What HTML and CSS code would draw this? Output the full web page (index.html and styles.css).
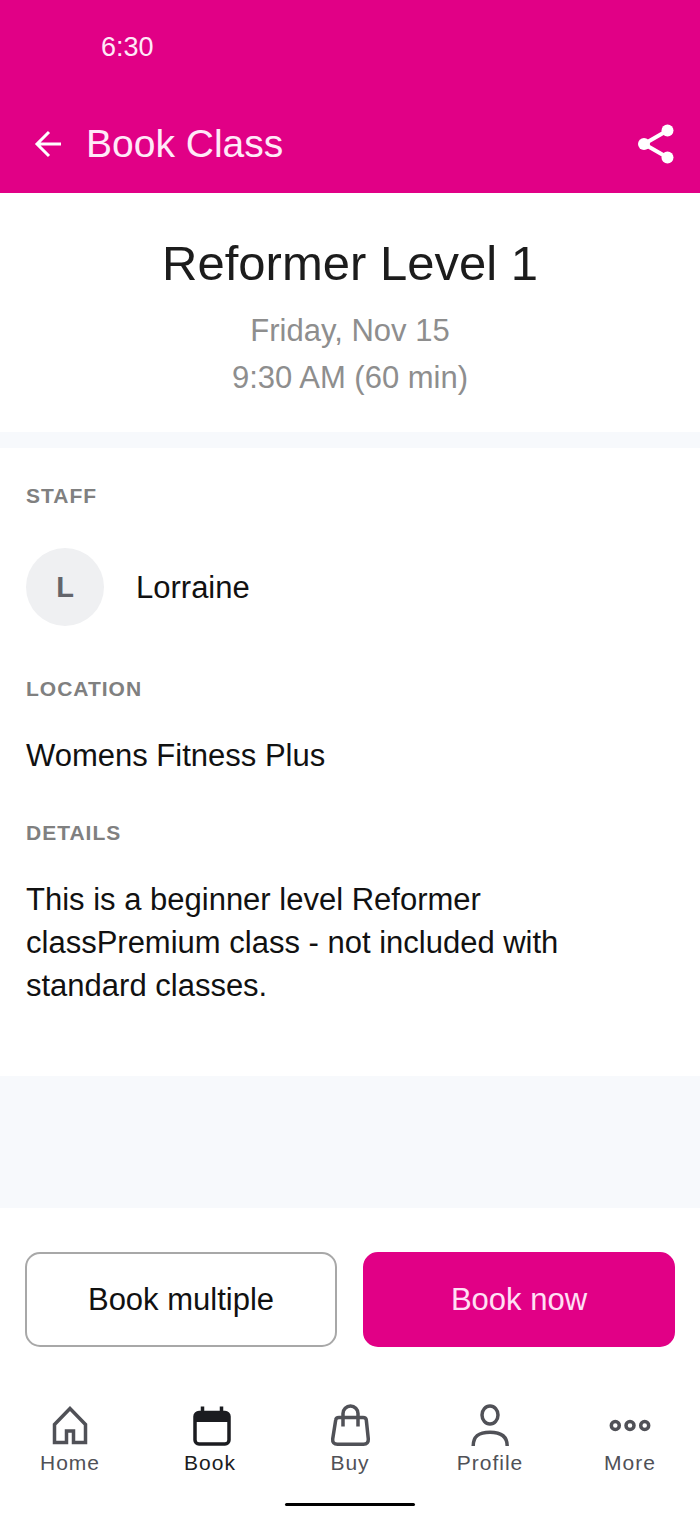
FILE: index.html
```html
<!DOCTYPE html>
<html lang="en">
<head>
  <meta charset="UTF-8" />
  <meta name="viewport" content="width=device-width, initial-scale=1.0" />
  <title>Book Class</title>
  <link rel="stylesheet" href="styles.css">
</head>
<body>
  <header class="header">
    <div class="status-bar">6:30</div>
    <div class="app-bar">
      <button class="icon-button" type="button" aria-label="Back">
        <svg width="28" height="28" viewBox="0 0 28 28" fill="none" stroke="currentColor" stroke-width="3">
          <path d="M27 14H3M15 2L3 14l12 12" />
        </svg>
      </button>
      <div class="app-title">Book Class</div>
      <button class="icon-button" type="button" aria-label="Share">
        <svg width="40" height="40" viewBox="0 0 40 40" fill="currentColor">
          <path d="M31.500 6.500L8 20l23.500 13.500" fill="none" stroke="currentColor" stroke-width="4" />
          <circle cx="31.500" cy="6.500" r="6" />
          <circle cx="8" cy="20" r="6" />
          <circle cx="31.500" cy="33.500" r="6" />
        </svg>
      </button>
    </div>
  </header>

  <main class="content">
    <section class="summary">
      <h1>Reformer Level 1</h1>
      <p>Friday, Nov 15</p>
      <p>9:30 AM (60 min)</p>
    </section>

    <div class="info">
      <section>
        <h2>Staff</h2>
        <div class="staff">
          <span class="avatar">L</span>
          <span>Lorraine</span>
        </div>
      </section>
      <section>
        <h2>Location</h2>
        <p>Womens Fitness Plus</p>
      </section>
      <section>
        <h2>Details</h2>
        <p>This is a beginner level Reformer classPremium class - not included with standard classes.</p>
      </section>
    </div>
  </main>

  <footer class="footer">
    <div class="actions">
      <button class="button" type="button">Book multiple</button>
      <button class="button primary" type="button">Book now</button>
    </div>

    <nav class="tabs">
      <a class="tab" href="#home">
        <svg class="tab-icon" viewBox="0 0 44 44">
          <path d="M22 5.500L6.500 21.500V39.500H18.500V28H25.500V39.500H37.500V21.500Z" />
        </svg>
        Home
      </a>
      <a class="tab active" href="#book">
        <svg class="tab-icon" viewBox="0 0 44 44">
          <path d="M14.500 3.500v6M33.500 3.500v6" />
          <rect x="7" y="9.500" width="34" height="31.500" rx="4" />
          <path d="M7 19V12a3 3 0 0 1 3-3h28a3 3 0 0 1 3 3v7z" fill="currentColor" stroke="none" />
        </svg>
        Book
      </a>
      <a class="tab" href="#buy">
        <svg class="tab-icon" viewBox="0 0 44 44">
          <path d="M11 14.500H35Q38 14.500 38.300 17L40.300 36Q40.600 41.200 35.500 41.200H9.500Q4.200 41.200 4.700 36L7.700 17Q8 14.500 11 14.500Z" />
          <path d="M15 23.500V10.500a7.500 7.500 0 0 1 15 0V23.500" />
        </svg>
        Buy
      </a>
      <a class="tab" href="#profile">
        <svg class="tab-icon" viewBox="0 0 44 44">
          <ellipse cx="22" cy="12" rx="8" ry="9" />
          <path d="M5.200 43C5.200 33 11 29.300 22 29.300S39.200 33 39.200 43" />
        </svg>
        Profile
      </a>
      <a class="tab" href="#more">
        <svg class="tab-icon" viewBox="0 0 44 44">
          <circle cx="7.300" cy="22.500" r="4" />
          <circle cx="22" cy="22.500" r="4" />
          <circle cx="36.700" cy="22.500" r="4" />
        </svg>
        More
      </a>
    </nav>
    <div class="home-indicator"></div>
  </footer>
</body>
</html>
```
FILE: styles.css
```css
* {
  box-sizing: border-box;
}

body {
  margin: 0;
  min-height: 100vh;
  display: flex;
  flex-direction: column;
  background: #f7f9fc;
  color: #111;
  font-family: "Liberation Sans", Arial, sans-serif;
  font-size: 31px;
  line-height: 43px;
}

h1, h2, p {
  margin: 0;
}

button {
  font: inherit;
  cursor: pointer;
}

/* header */
.header {
  background: #e10086;
  color: #ffe9f8;
}

.status-bar {
  padding: 26px 101px 24px;
  font-size: 27px;
}

.app-bar {
  display: flex;
  align-items: center;
  padding: 28px 24px 26px 34px;
}

.app-title {
  flex: 1;
  margin-left: 24px;
  font-size: 39px;
  line-height: 46px;
}

.icon-button {
  display: flex;
  padding: 0;
  border: none;
  background: none;
  color: #fff;
}

/* class details */
.content {
  flex: 1;
  padding-bottom: 132px;
}

.summary {
  padding: 41px 26px 31px;
  background: #fff;
  color: #8e8e8e;
  line-height: 47px;
  text-align: center;
}

h1 {
  margin-bottom: 15px;
  color: #1c1c1c;
  font-size: 49px;
  font-weight: normal;
  line-height: 58px;
}

.info {
  display: flex;
  flex-direction: column;
  gap: 43px;
  margin-top: 16px;
  padding: 35px 26px 69px;
  background: #fff;
}

h2 {
  margin-bottom: 32px;
  color: #808080;
  font-size: 21px;
  letter-spacing: 1px;
  line-height: 26px;
  text-transform: uppercase;
}

.staff {
  display: flex;
  align-items: center;
  gap: 32px;
  padding: 7px 0;
}

.avatar {
  display: flex;
  align-items: center;
  justify-content: center;
  width: 78px;
  height: 78px;
  border-radius: 50%;
  background: #eff0f2;
  color: #63656b;
  font-size: 29px;
  font-weight: bold;
}

/* bottom buttons and tabs */
.footer {
  padding-bottom: 12px;
  background: #fff;
}

.actions {
  display: flex;
  gap: 26px;
  padding: 44px 25px 56px;
}

.button {
  flex: 1;
  padding: 24px 16px;
  border: 2px solid #a8a8a8;
  border-radius: 15px;
  background: #fff;
  color: #111;
}

.button.primary {
  border-color: #e10086;
  background: #e10086;
  color: #ffe0f5;
}

.tabs {
  display: flex;
}

.tab {
  flex: 1;
  display: flex;
  flex-direction: column;
  align-items: center;
  gap: 4px;
  color: #505157;
  font-size: 21px;
  letter-spacing: 1px;
  line-height: 24px;
  text-decoration: none;
}

.tab.active {
  color: #1b1c20;
}

.tab-icon {
  width: 44px;
  height: 44px;
  fill: none;
  stroke: currentColor;
  stroke-width: 3.500;
}

.home-indicator {
  width: 130px;
  height: 3px;
  margin: 28px auto 0;
  border-radius: 2px;
  background: #000;
}
```
